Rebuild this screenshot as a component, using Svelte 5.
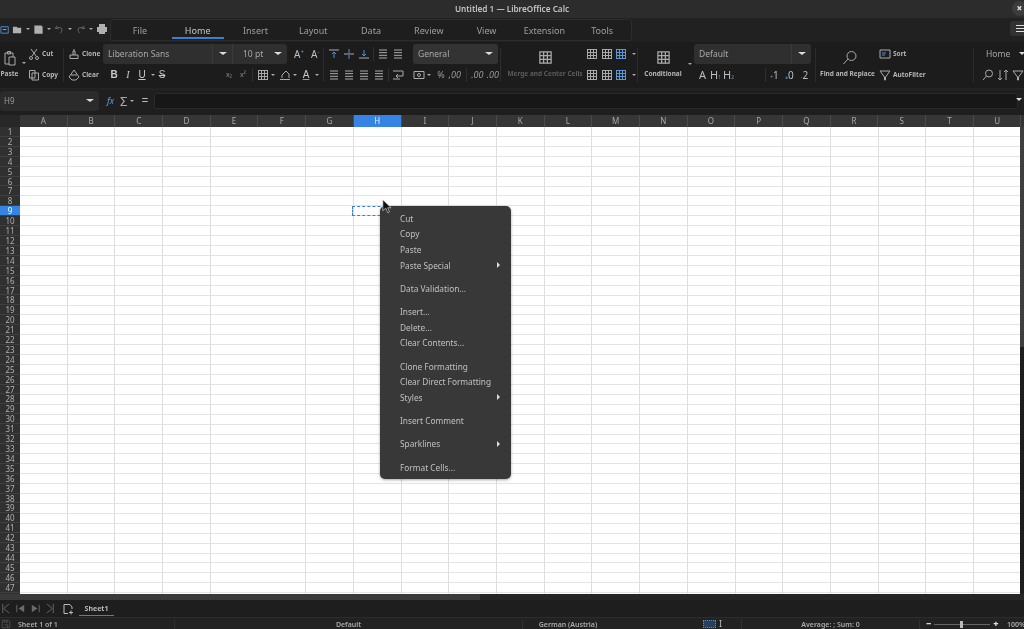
<script>
  const tabs = ['File','Home','Insert','Layout','Data','Review','View','Extension','Tools'];
  const cols = 'ABCDEFGHIJKLMNOPQRSTU'.split('');
  const rows = Array.from({length:47},(_,i)=>i+1);
  const menu = [
    [['Cut'],['Copy'],['Paste'],['Paste Special',1]],
    [['Data Validation...']],
    [['Insert...'],['Delete...'],['Clear Contents...']],
    [['Clone Formatting'],['Clear Direct Formatting'],['Styles',1]],
    [['Insert Comment']],
    [['Sparklines',1]],
    [['Format Cells...']]
  ];
</script>

{#snippet lines(n, cls='')}
  <svg class="ic {cls}" viewBox="0 0 12 12">
    {#each Array(n) as _, i}<path d="M2 {2+i*8/(n-1)}H10"/>{/each}
  </svg>
{/snippet}
{#snippet grid3(cls='')}
  <svg class="ic {cls}" viewBox="0 0 12 12"><rect x="1.5" y="1.5" width="9" height="9"/><path d="M1.5 4.5H10.5M1.5 7.5H10.5M4.5 1.5V10.5M7.5 1.5V10.5"/></svg>
{/snippet}
{#snippet arrow()}<i class="mini"></i>{/snippet}

<div class="app">
  <header class="title">
    <span>Untitled 1 — LibreOffice Calc</span>
    <b class="close">×</b>
  </header>

  <div class="tabrow">
    <div class="quick">
      <svg class="ic" viewBox="0 0 12 12"><path class="blue" d="M1 3H9V10H1Z"/><path d="M3 6H7"/></svg>
      <svg class="ic solid" viewBox="0 0 12 12"><path d="M1 3H5L6 4H10V10H1Z"/></svg>{@render arrow()}
      <svg class="ic solid" viewBox="0 0 12 12"><path d="M1.5 1.5H9L10.5 3V10.5H1.5Z"/></svg>{@render arrow()}
      <svg class="ic dim" viewBox="0 0 12 12"><path d="M3 2L1.5 5H5M2 5C7 2 11 5 7 10"/></svg>{@render arrow()}
      <svg class="ic dim" viewBox="0 0 12 12"><path d="M9 2L10.5 5H7M10 5C5 2 1 5 5 10"/></svg>{@render arrow()}
      <svg class="ic solid print" viewBox="0 0 12 12"><path d="M3 1H9V4H11V9H9V11H3V9H1V4H3Z"/></svg>
    </div>
    <nav class="tabs">
      {#each tabs as t}<span class="tab" class:on={t==='Home'}>{t}</span>{/each}
    </nav>
    <div class="burger"><i></i><i></i><i></i></div>
  </div>

  <div class="ribbon">
    <div class="g paste">
      <svg class="big" viewBox="0 0 16 16"><path d="M3 3H11V14H3ZM5.5 1.5H8.5V4H5.5Z"/><path class="fillbg" d="M7 7H13V15H7Z"/></svg>
      <span class="lbl">Paste</span>
      <i class="mini pastearrow"></i>
    </div>
    <div class="g two cut">
      <div class="r"><svg class="ic" viewBox="0 0 12 12"><path d="M3 1L8 8M9 1L4 8"/><circle cx="3" cy="10" r="1.5"/><circle cx="9" cy="10" r="1.5"/></svg><span class="lbl">Cut</span></div>
      <div class="r"><svg class="ic" viewBox="0 0 12 12"><path d="M1.5 1.5H7V9H1.5ZM4 4H10.5V11H4Z"/></svg><span class="lbl">Copy</span></div>
    </div>
    <i class="sep"></i>
    <div class="g two clone">
      <div class="r"><svg class="ic" viewBox="0 0 12 12"><path d="M2 10.5V7H10V10.5ZM5 7V3H7V7M5 2H7"/></svg><span class="lbl">Clone</span></div>
      <div class="r"><svg class="ic" viewBox="0 0 12 12"><path d="M6 1L11 8L8 11H4L1 8Z"/><path d="M3 6H9"/></svg><span class="lbl">Clear</span></div>
    </div>
    <div class="g two font">
      <div class="r">
        <div class="combo fontname"><span>Liberation Sans</span><em></em></div>
        <div class="combo fontsize"><span>10 pt</span><em></em></div>
      </div>
      <div class="r fmt">
        <b class="glyph">B</b><b class="glyph it">I</b><b class="glyph un">U</b>{@render arrow()}<b class="glyph st">S</b>
        <span class="sub">x₂</span><span class="sub">x²</span><i class="vs"></i>
        {@render grid3()}{@render arrow()}
        <svg class="ic" viewBox="0 0 12 12"><path d="M1 10.5H11M3 9V6L7 2L10 5V9"/></svg>{@render arrow()}
        <b class="glyph acol">A</b>{@render arrow()}
      </div>
    </div>
    <div class="g two grow">
      <div class="r"><span class="aa">A<sup>+</sup></span><span class="aa">A<sup>-</sup></span></div>
      <div class="r"></div>
    </div>
    <i class="sep"></i>
    <div class="g two align">
      <div class="r">
        <svg class="ic" viewBox="0 0 12 12"><path d="M1 2H11"/><path class="blue" d="M6 10V4M4 6L6 4L8 6"/></svg>
        <svg class="ic" viewBox="0 0 12 12"><path d="M1 6H11"/><path class="blue" d="M6 1V5M6 7V11"/></svg>
        <svg class="ic" viewBox="0 0 12 12"><path d="M1 10H11"/><path class="blue" d="M6 2V8M4 6L6 8L8 6"/></svg>
        <i class="vs"></i>
        {@render lines(4)}{@render lines(4)}
      </div>
      <div class="r">
        {@render lines(4)}{@render lines(4)}{@render lines(4)}{@render lines(4)}
        <i class="vs"></i>
        <svg class="ic" viewBox="0 0 12 12"><path d="M1 2H11V7H4M6 5L4 7L6 9M1 10H8"/></svg>
      </div>
    </div>
    <div class="g two number">
      <div class="r"><div class="combo general"><span>General</span><em></em></div></div>
      <div class="r numrow">
        <svg class="ic" viewBox="0 0 12 12"><path d="M1 2.5H11V9.5H1Z"/><circle cx="6" cy="6" r="1.5"/></svg>{@render arrow()}
        <span class="sym pct">%</span><span class="sym">,00</span><i class="vs"></i><span class="sym">.00</span><span class="sym">.00</span>
      </div>
    </div>
    <i class="sep"></i>
    <div class="g merge">
      {@render grid3('bigic')}
      <span class="lbl off">Merge and Center Cells</span>
    </div>
    <div class="g two cells">
      <div class="r">{@render grid3()}{@render grid3()}{@render grid3('bl')}{@render arrow()}</div>
      <div class="r">{@render grid3()}{@render grid3()}{@render grid3('bl')}{@render arrow()}</div>
    </div>
    <i class="sep"></i>
    <div class="g cond">
      {@render grid3('bigic')}
      <span class="lbl">Conditional</span>
      <i class="mini corner"></i>
    </div>
    <div class="g two styles">
      <div class="r"><div class="combo def"><span>Default</span><em></em></div></div>
      <div class="r hs">
        <span class="hh">A</span><span class="hh">H<small>1</small></span><span class="hh">H<small>2</small></span>
        <i class="vs"></i>
        <span class="hh n"><small>+</small>1</span><span class="hh n"><small>±</small>0</span><span class="hh n"><small>-</small>2</span>
      </div>
    </div>
    <i class="sep"></i>
    <div class="g find">
      <svg class="big" viewBox="0 0 16 16"><circle cx="9.5" cy="6" r="4.5"/><path d="M6 9L1.5 14"/></svg>
      <span class="lbl">Find and Replace</span>
    </div>
    <div class="g two sort">
      <div class="r"><svg class="ic" viewBox="0 0 12 12"><path d="M1 2H11V10H1Z"/><path class="blue" d="M3 5H7M3 7H6"/></svg><span class="lbl">Sort</span></div>
      <div class="r"><svg class="ic" viewBox="0 0 12 12"><path d="M1 2H11L6.5 8V11H5.5V8Z"/></svg><span class="lbl">AutoFilter</span></div>
    </div>
    <i class="sep"></i>
    <div class="g two home">
      <div class="r homer"><span>Home</span><em class="tri"></em></div>
      <div class="r">
        <svg class="ic" viewBox="0 0 12 12"><circle cx="7" cy="4.5" r="3.5"/><path d="M4.5 7L1 11"/></svg>
        <svg class="ic" viewBox="0 0 12 12"><path d="M3 1V11M1 9L3 11L5 9M9 11V1M7 3L9 1L11 3"/></svg>
        <svg class="ic" viewBox="0 0 12 12"><path d="M1 2H11L6.5 8V11H5.5V8Z"/></svg>
      </div>
    </div>
  </div>

  <div class="formula">
    <div class="namebox"><span>H9</span><em></em></div>
    <div class="fx">
      <span class="fxi">fx</span><span class="sigma">Σ</span>{@render arrow()}<span class="eq">=</span>
    </div>
    <div class="input"></div>
    <em class="tri fdrop"></em>
  </div>

  <div class="sheet">
    <div class="colhead">
      <div class="corner-cell"></div>
      {#each cols as c}<div class="ch" class:sel={c==='H'}>{c}</div>{/each}
    </div>
    <div class="main">
      <div class="rowhead">
        {#each rows as r}<div class="rh" class:sel={r===9}>{r}</div>{/each}
      </div>
      <div class="cells-area">
        <div class="cursorcell"></div>
      </div>
      <div class="vscroll"><i></i></div>
      <div class="ctx">
        {#each menu as sec, i}
          {#if i>0}<div class="msep"></div>{/if}
          {#each sec as it}
            <div class="mi"><span>{it[0]}</span>{#if it[1]}<em></em>{/if}</div>
          {/each}
        {/each}
      </div>
      <svg class="pointer" viewBox="0 0 12 18"><path d="M1 1V14L4.5 11L7 16.5L9 15.5L6.8 10.5H11Z"/></svg>
    </div>
  </div>

  <div class="hscroll"><i></i></div>
  <div class="sheettabs">
    <svg class="nav" viewBox="0 0 12 12"><path d="M3 1V11M10 1L4 6L10 11"/></svg>
    <svg class="nav" viewBox="0 0 12 12"><path d="M2 2V10"/><path class="fl" d="M10 2V10L4 6Z"/></svg>
    <svg class="nav" viewBox="0 0 12 12"><path d="M10 2V10"/><path class="fl" d="M2 2V10L8 6Z"/></svg>
    <svg class="nav" viewBox="0 0 12 12"><path d="M9 1V11M2 1L8 6L2 11"/></svg>
    <svg class="nav add" viewBox="0 0 12 12"><path d="M6 1.5H2V10.5H6M2 1.5H8L10 4V6M9 7.5V11.5M7 9.5H11"/></svg>
    <span class="stab">Sheet1</span>
  </div>
  <footer class="status">
    <svg class="save" viewBox="0 0 12 12"><path d="M1.5 1.5H9L10.5 3V10.5H1.5ZM4 7H8V10.5M4 1.5V4H8V1.5"/></svg>
    <span class="s1">Sheet 1 of 1</span>
    <span class="s2">Default</span>
    <span class="s3">German (Austria)</span>
    <span class="s4"><i class="selmode"></i><b>I</b></span>
    <span class="s5">Average: ; Sum: 0</span>
    <span class="s6"><b>−</b><i class="slider"><u></u></i><b>+</b></span>
    <span class="s7">100%</span>
  </footer>
</div>

<style>
  :global(body){margin:0;background:#1e1e1e}
  .app{width:1024px;height:629px;display:flex;flex-direction:column;overflow:hidden;font-family:"Noto Sans","Open Sans",sans-serif;color:#bdbdbd;background:#1e1e1e;filter:blur(.45px)}
  em{font-style:normal}
  .title{height:18px;flex:none;background:#2c2c2c;display:flex;align-items:center;justify-content:center;position:relative;font-size:8.2px;font-weight:600;color:#c4c4c4;padding-bottom:2px;box-sizing:border-box}
  .close{position:absolute;right:-3px;top:1px;width:15px;height:15px;border-radius:50%;background:#3c3c3c;color:#ddd;font-size:10px;line-height:15px;text-align:center}

  .tabrow{height:24px;flex:none;background:#212121;display:flex;align-items:stretch;position:relative}
  .quick{width:110px;display:flex;align-items:center;gap:1px;padding-bottom:2px;box-sizing:border-box;flex:none}
  .quick .ic{width:11px;height:11px}
  .quick .print{margin-left:0;width:12px;height:12px}
  .tabs{width:522px;display:flex;border:1px solid #2c2c2c;border-radius:2px;margin-top:1px;margin-bottom:1px;background:#1e1e1e;box-sizing:border-box}
  .tab{flex:1;text-align:center;font-size:9px;line-height:22px;color:#9f9f9f;position:relative}
  .tab.on{color:#c4c4c4}
  .tab.on::after{content:"";position:absolute;left:3px;right:3px;bottom:1px;height:2px;background:#3b7fcf}
  .burger{position:absolute;right:-6px;top:3px;width:20px;height:15px;background:#323232;border-radius:3px;display:flex;flex-direction:column;gap:2px;align-items:center;justify-content:center}
  .burger i{display:block;width:9px;height:1px;background:#ddd}

  .ribbon{height:46px;flex:none;background:#1c1c1c;display:flex;align-items:stretch;font-size:7px;position:relative;border-bottom:2px solid #232323;box-sizing:content-box}
  .g{position:relative;flex:none;display:flex;flex-direction:column;align-items:center}
  .two{padding-top:1px;gap:0;align-items:flex-start}
  .r{display:flex;align-items:center;height:21px;gap:2px}
  .sep{flex:none;width:1px;margin:6px 0 6px;background:#2c2c2c}
  .vs{flex:none;width:1px;height:14px;background:#2f2f2f;margin:0 3px}
  .lbl{font-size:6.5px;font-weight:700;color:#b5b5b5;white-space:nowrap}
  .lbl.off{color:#5b5b5b}
  .ic{width:12px;height:12px;flex:none;fill:none;stroke:#aaa;stroke-width:1}
  .ic.dim{stroke:#6a6a6a}
  .ic.bl{stroke:#5c97d8}
  .ic.solid{fill:#b0b0b0;stroke:none}
  .ic .blue,.blue{stroke:#4d8fd6}
  .big{width:16px;height:16px;fill:none;stroke:#aaa;stroke-width:1}
  .fillbg{fill:#1c1c1c}
  .mini{display:inline-block;flex:none;width:0;height:0;border:2px solid transparent;border-top:2.5px solid #aaa;border-bottom:0;margin:0 2px}

  .paste{width:19px;margin-right:9px;padding-top:8px;gap:3px}
  .pastearrow{position:absolute;left:20px;top:20px}
  .cut{width:35px}
  .clone{width:34px;margin-left:4px}
  .font{width:188px;margin-left:1px}
  .grow{width:32px;padding-left:3px;box-sizing:border-box}
  .aa{font-size:10px;width:15px;color:#c0c0c0}
  .aa sup{font-size:6px;color:#5d98d8;vertical-align:4px;line-height:0}
  .combo{height:20px;background:#2f2f2f;display:flex;align-items:center;font-size:8.5px;color:#a8a8a8;box-sizing:border-box;padding-left:5px;position:relative;border-radius:3px}
  .combo span{flex:1;white-space:nowrap}
  .combo em,.namebox em{width:0;height:0;border:4px solid transparent;border-top:3.5px solid #ddd;border-bottom:0;margin-right:5px}
  .fontname{width:130px;border-radius:3px 0 0 3px;border-right:1px solid #3a3a3a}
  .fontname::after,.def::after{content:"";position:absolute;right:19px;top:0;bottom:0;width:1px;background:#3a3a3a}
  .fontsize{width:54px;margin-left:-2px;border-radius:0 3px 3px 0;padding-left:10px}
  .fmt{padding-left:4px;gap:0}
  .fmt .vs{margin:0 2px}
  .glyph{width:14px;text-align:center;font-size:10px;color:#c8c8c8;font-family:"Liberation Sans",sans-serif}
  .it{font-style:italic;font-weight:400;font-family:"Liberation Serif",serif}
  .un{text-decoration:underline;font-weight:400}
  .st{text-decoration:line-through;font-weight:400;margin-left:-2px;margin-right:53px}
  .acol{text-decoration:underline;text-decoration-color:#999;font-weight:400}
  .fmt .ic{margin-left:2px}
  .sub{font-size:7px;color:#8a8a8a;width:14px;text-align:center}
  .align{width:85px;margin-left:4px}
  .align .r{gap:3px}
  .align .vs{margin:0}
  .number{width:87px}
  .numrow{gap:0}
  .general{width:85px;background:#333}
  .sym{font-size:9px;color:#999;font-style:italic;width:15.5px;text-align:center}
  .pct{font-style:normal;width:12px;margin-left:2px}
  .merge{width:82px;padding-top:8px;gap:4px;margin-left:3px}
  .bigic{width:15px;height:15px}
  .cells{width:51px}
  .cells .r{gap:2.5px}
  .cond{width:50px;padding-top:8px;gap:4px}
  .corner{position:absolute;right:-6px;top:21px}
  .styles{width:121px;margin-left:6px}
  .def{width:117px}
  .hs{gap:0;padding-left:2px}
  .hh{font-size:11px;color:#bdbdbd;width:13px;text-align:center;white-space:nowrap}
  .hh small{font-size:5px;color:#5d98d8}
  .hh.n{width:15px;font-size:10px}
  .hs .vs{margin:0 1px 0 30px}
  .find{width:63px;padding-top:8px;gap:3px}
  .find .big{margin-left:4px}
  .sort{width:94px}
  .home{width:49px;padding-left:8px;box-sizing:border-box}
  .home .r{gap:3px}
  .homer span{font-size:8.5px;color:#a8a8a8}
  .homer{margin-left:4px}
  .home .homer{gap:9px}
  .tri{display:block;width:0;height:0;border:3.5px solid transparent;border-top:3px solid #ddd;border-bottom:0}

  .formula{height:21px;flex:none;background:#1f1f1f;display:flex;align-items:center;position:relative}
  .namebox{width:99px;height:20px;background:#2b2b2b;display:flex;align-items:center;font-size:8px;color:#999;padding-left:4px;box-sizing:border-box;border-radius:3px}
  .namebox span{flex:1}
  .fx{display:flex;align-items:center;width:55px;padding-left:8px;box-sizing:border-box}
  .fxi{font-size:9px;font-style:italic;color:#5d98d8;width:12px}
  .sigma{font-size:13px;color:#aaa;margin-left:1px;margin-right:1px}
  .eq{font-size:12px;color:#bbb;margin-left:5px}
  .input{width:862px;height:14px;background:#171717;border:1px solid #2a2a2a;border-radius:2px}
  .fdrop{position:absolute;right:2px;top:8px}

  .sheet{height:479px;flex:none;display:flex;flex-direction:column;margin-top:4px}
  .colhead{height:12px;display:grid;grid-template-columns:20px repeat(21,47.7px);flex:none;background:#333}
  .corner-cell{background:#272727}
  .ch{background:#363636;border-right:1px solid #4a4a4a;box-sizing:border-box;text-align:center;font-size:8px;line-height:12px;color:#a9a9a9}
  .ch.sel{background:#3584e4;color:#e8f0fa}
  .main{flex:1;display:flex;position:relative;min-height:0}
  .rowhead{width:20px;display:grid;grid-template-rows:repeat(47,9.92px);background:#303030;flex:none}
  .rh{font-size:8px;line-height:9.9px;text-align:center;color:#b0b0b0;border-bottom:1px solid #3f3f3f;box-sizing:border-box}
  .rh.sel{background:#3584e4;color:#fff}
  .cells-area{flex:1;position:relative;background-color:#fff;background-image:repeating-linear-gradient(90deg,transparent 0,transparent 46.7px,#dedede 46.7px,#dedede 47.7px),repeating-linear-gradient(180deg,transparent 0,transparent 8.92px,#e4e4e4 8.92px,#e4e4e4 9.92px)}
  .cursorcell{position:absolute;left:332px;top:79px;width:49px;height:10px;border:1px dashed #3b7fcf;box-sizing:border-box}
  .vscroll{width:4px;background:#1e1e1e;flex:none}
  .vscroll i{display:block;height:220px;background:#3e3e3e}
  .ctx{position:absolute;left:380px;top:79px;width:131px;height:273px;box-sizing:border-box;padding-top:4.5px;background:#383838;border-radius:5px;box-shadow:0 1px 3px rgba(0,0,0,.35);z-index:2}
  .mi{height:15.6px;display:flex;align-items:center;padding-left:20px;padding-right:11px;font-size:8.3px;color:#c0c0c0}
  .mi span{flex:1}
  .mi em{width:0;height:0;border:3px solid transparent;border-left:3.5px solid #ddd;border-right:0}
  .msep{height:7.7px}
  .pointer{position:absolute;left:382px;top:72px;width:10px;height:15px;z-index:3;fill:#111;stroke:#ddd;stroke-width:.8}

  .hscroll{height:6px;flex:none;background:#262626}
  .hscroll i{display:block;width:480px;height:100%;background:#3a3a3a}
  .sheettabs{height:17px;flex:none;background:#1e1e1e;display:flex;align-items:center;gap:4px}
  .nav{width:11px;height:11px;flex:none;fill:none;stroke:#6a6a6a;stroke-width:1}
  .fl{fill:#6a6a6a;stroke:none}
  .add{stroke:#bbb;margin-left:2px;width:12px;height:12px}
  .stab{font-size:7px;font-weight:700;color:#bbb;margin-left:1px;padding:2px 0;border-bottom:1.5px solid #777;width:35px;text-align:center}
  .status{height:12px;flex:none;background:#222;border-top:1px solid #2c2c2c;display:flex;align-items:center;font-size:7px;color:#aaa;font-weight:600;box-sizing:content-box;padding-bottom:1px;margin-bottom:-1px}
  .status span{flex:none;white-space:nowrap}
  .save{width:10px;height:10px;fill:none;stroke:#555;margin-left:1px;flex:none}
  .s1{margin-left:7px;width:156px;border-right:1px solid #303030}
  .s2{width:347px;text-align:center;border-right:1px solid #303030}
  .s3{width:90px;text-align:center}
  .s4{width:39px;margin-left:90px;display:flex;align-items:center;gap:3px;border-right:1px solid #303030;box-sizing:border-box}
  .selmode{display:block;width:11px;height:6px;border:1px dotted #4d8fd6;background:#26405f;flex:none}
  .s4 b{font-size:9px;font-weight:400;line-height:10px;color:#bbb}
  .s5{width:178px;text-align:center;border-right:1px solid #303030;box-sizing:border-box}
  .s6{width:85px;display:flex;align-items:center;gap:3px;padding-left:6px;box-sizing:border-box}
  .s6 b{font-size:9px;color:#ddd;line-height:8px}
  .slider{display:block;flex:none;width:56px;height:1px;background:#666;position:relative}
  .slider u{position:absolute;left:26px;top:-3px;width:3px;height:7px;background:#bbb}
  .s7{margin-left:2px}
</style>
